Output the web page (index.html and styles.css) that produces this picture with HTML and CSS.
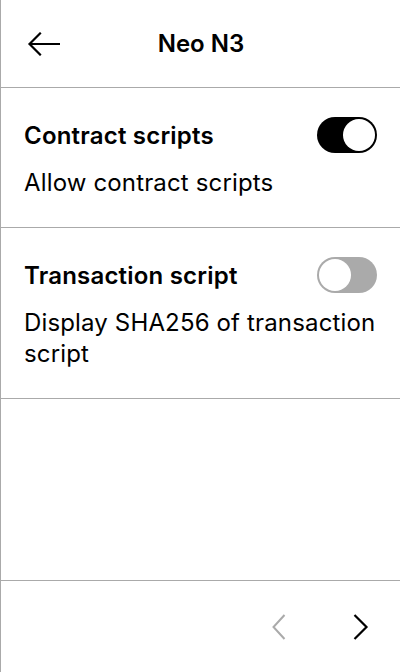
FILE: index.html
```html
<!DOCTYPE html>
<html>
<head>
<meta charset="utf-8">
<link rel="stylesheet" href="styles.css">
</head>
<body>
<div class="screen">
  <header class="header">
    <button class="back" aria-label="Back">
      <svg width="32" height="24" viewBox="0 0 32 24" fill="none" stroke="#000" stroke-width="2.2" stroke-linecap="square">
        <path d="M2 12 H31"/>
        <path d="M12 1.5 L1.5 12 L12 22.5"/>
      </svg>
    </button>
    <h1 class="title">Neo N3</h1>
  </header>

  <section class="setting">
    <div class="setting-head">
      <span class="setting-title">Contract scripts</span>
      <span class="toggle on"><span class="knob"></span></span>
    </div>
    <p class="setting-desc">Allow contract scripts</p>
  </section>

  <section class="setting">
    <div class="setting-head">
      <span class="setting-title">Transaction script</span>
      <span class="toggle off"><span class="knob"></span></span>
    </div>
    <p class="setting-desc">Display SHA256 of transaction script</p>
  </section>

  <div class="fill"></div>

  <footer class="footer">
    <svg class="chev prev" width="14" height="26" viewBox="0 0 14 26" fill="none" stroke="#aaaaaa" stroke-width="2">
      <path d="M12.5 1 L1.5 13 L12.5 25"/>
    </svg>
    <svg class="chev next" width="16" height="26" viewBox="0 0 16 26" fill="none" stroke="#000" stroke-width="2.2">
      <path d="M1.5 1 L13.5 13 L1.5 25"/>
    </svg>
  </footer>
</div>
</body>
</html>
```

FILE: styles.css
```css
* { box-sizing: border-box; }
html, body {
  margin: 0;
  padding: 0;
  background: #fff;
}
body {
  font-family: Inter, "Noto Sans", sans-serif;
  color: #000;
}
.screen {
  width: 400px;
  height: 672px;
  border-left: 1px solid #aaaaaa;
  display: flex;
  flex-direction: column;
}
.header {
  height: 88px;
  flex: none;
  border-bottom: 1px solid #aaaaaa;
  display: flex;
  align-items: center;
  padding: 0 0 0 27px;
}
.back {
  border: 0;
  background: none;
  padding: 0;
  width: 32px;
  height: 24px;
  display: flex;
}
.title {
  margin: 0;
  flex: 1;
  text-align: center;
  font-size: 24px;
  font-weight: 600;
  padding-right: 58px;
}
.setting {
  border-bottom: 1px solid #aaaaaa;
  padding: 29px 23px 29px 23px;
  display: flex;
  flex-direction: column;
  gap: 14px;
  flex: none;
}
.setting-head {
  display: flex;
  align-items: center;
  justify-content: space-between;
  height: 36px;
}
.setting-title {
  font-size: 24px;
  font-weight: 600;
  letter-spacing: 0.2px;
}
.setting-desc {
  margin: 0;
  font-size: 24px;
  line-height: 31px;
  font-weight: 400;
  letter-spacing: 0.15px;
}
.toggle {
  width: 60px;
  height: 36px;
  border-radius: 18px;
  display: flex;
  align-items: center;
  padding: 2px;
}
.toggle.on {
  background: #000;
  justify-content: flex-end;
}
.toggle.off {
  background: #aaaaaa;
  justify-content: flex-start;
}
.knob {
  width: 32px;
  height: 32px;
  border-radius: 50%;
  background: #fff;
}
.fill { flex: 1; border-bottom: 1px solid #aaaaaa; }
.footer {
  height: 91px;
  flex: none;
  display: flex;
  align-items: center;
  justify-content: flex-end;
  padding-right: 31px;
  gap: 67px;
}
.chev { display: block; }
```
